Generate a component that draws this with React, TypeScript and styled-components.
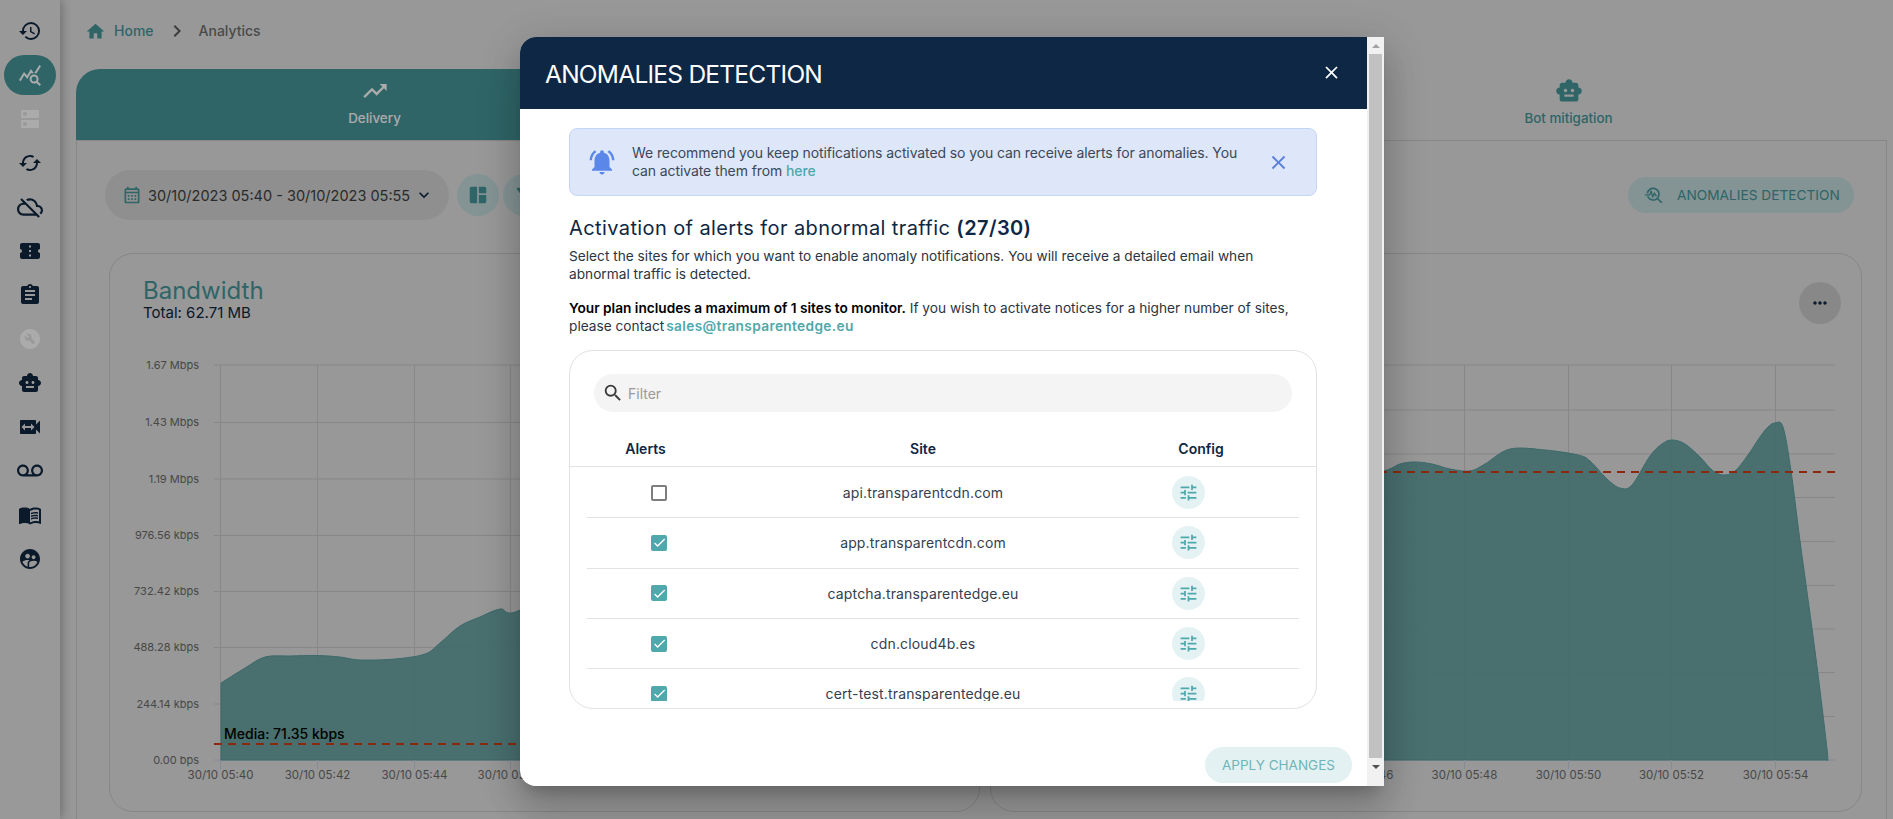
import React from 'react';
import styled, { createGlobalStyle } from 'styled-components';
import {
  MdAssignment,
  MdBuildCircle,
  MdCached,
  MdCheck,
  MdChevronRight,
  MdClose,
  MdConfirmationNumber,
  MdDns,
  MdExpandMore,
  MdFilterAlt,
  MdHistory,
  MdHome,
  MdMenuBook,
  MdMoreHoriz,
  MdNotificationsActive,
  MdOutlineCalendarMonth,
  MdOutlineCloudOff,
  MdOutlineTroubleshoot,
  MdQueryStats,
  MdSearch,
  MdSmartToy,
  MdSpaceDashboard,
  MdSupervisedUserCircle,
  MdSwitchVideo,
  MdTrendingUp,
  MdTune,
  MdVoicemail,
} from 'react-icons/md';

const teal = '#46979a';
const navy = '#0f2740';
const font = 'Inter, "Noto Sans", sans-serif';

const GlobalStyle = createGlobalStyle`
  html, body {
    margin: 0;
    height: 100%;
    overflow: hidden;
    background: #e3e3e3;
    font-family: ${font};
  }
  * { box-sizing: border-box; }
`;

const Page = styled.div`
  display: flex;
  width: 1893px;
  height: 819px;
  overflow: hidden;
  background: #e3e3e3;
`;

const Sidebar = styled.nav`
  flex: 0 0 60px;
  display: flex;
  flex-direction: column;
  align-items: center;
  padding-top: 9px;
  background: #e5e5e5;
  box-shadow: 2px 0 10px rgba(0, 0, 0, 0.28);
  position: relative;
`;

const SideItem = styled.div<{ $active?: boolean; $muted?: boolean; $large?: boolean }>`
  width: 52px;
  height: 44px;
  display: flex;
  align-items: center;
  justify-content: center;
  font-size: ${(p) => (p.$large ? '26px' : '24px')};
  color: ${(p) => (p.$muted ? '#ffffff' : p.$active ? '#ffffff' : navy)};
  & > span {
    width: 52px;
    height: 40px;
    display: flex;
    align-items: center;
    justify-content: center;
    border-radius: 20px;
    background: ${(p) => (p.$active ? teal : 'transparent')};
  }
`;

const Main = styled.main`
  flex: 1;
  min-width: 0;
  padding: 0 6px 0 16px;
`;

const Crumbs = styled.div`
  height: 69px;
  padding: 20px 0 0 9px;
  display: flex;
  align-items: flex-start;
  font-size: 14px;
  font-weight: 500;
  line-height: 22px;
  color: #6f6f6f;
`;

const HomeLink = styled.span`
  display: flex;
  align-items: center;
  gap: 8px;
  color: ${teal};
  font-size: 14px;
  svg { font-size: 21px; }
`;

const CrumbSep = styled.span`
  display: flex;
  align-items: center;
  height: 22px;
  margin: 0 10px 0 11px;
  font-size: 24px;
  color: #5a5a5a;
`;

const Tabs = styled.div`
  display: grid;
  grid-template-columns: repeat(3, 597px);
  height: 71px;
`;

const Tab = styled.div<{ $active?: boolean }>`
  display: flex;
  flex-direction: column;
  align-items: center;
  padding-top: 8px;
  font-size: 13.4px;
  font-weight: 500;
  color: ${(p) => (p.$active ? '#ffffff' : teal)};
  background: ${(p) => (p.$active ? teal : 'transparent')};
  border-radius: 24px 24px 0 0;
  svg { font-size: 28px; margin-bottom: 5px; }
`;

const Panel = styled.section`
  height: 700px;
  padding: 29px 24px 0 32px;
  border: 1px solid #c9c9c9;
`;

const Toolbar = styled.div`
  display: flex;
  align-items: center;
  gap: 8px;
  height: 50px;
  margin: 0 8px 33px -4px;
`;

const DatePill = styled.div`
  width: 344px;
  height: 50px;
  padding: 0 17px;
  display: flex;
  align-items: center;
  border-radius: 25px;
  background: #d5d5d5;
  font-size: 14.5px;
  color: #3f3f3f;
  white-space: nowrap;
  svg:first-child { color: ${teal}; font-size: 20px; margin-right: 6px; flex: none; }
  svg:last-child { color: ${navy}; font-size: 20px; margin-left: 4px; flex: none; }
`;

const RoundIcon = styled.div`
  flex: none;
  width: 42px;
  height: 42px;
  display: flex;
  align-items: center;
  justify-content: center;
  border-radius: 50%;
  background: #c5dcdd;
  color: ${teal};
  font-size: 22px;
  & + & { margin-left: -4px; }
`;

const AnomaliesButton = styled.div`
  margin-left: auto;
  width: 226px;
  height: 36px;
  padding-left: 16px;
  display: flex;
  align-items: center;
  gap: 13px;
  border-radius: 18px;
  background: #c5dcdd;
  color: ${teal};
  font-size: 13.7px;
  white-space: nowrap;
  svg { font-size: 20px; flex: none; }
`;

const Charts = styled.div`
  display: grid;
  grid-template-columns: 871px 872px;
  gap: 10px;
`;

const ChartCard = styled.article`
  position: relative;
  height: 559px;
  border: 1px solid #c9c9c9;
  border-radius: 24px;
  overflow: hidden;
`;

const ChartHead = styled.header`
  height: 99px;
  padding: 22px 0 0 33px;
`;

const ChartTitle = styled.div`
  font-size: 24px;
  line-height: 30px;
  color: ${teal};
`;

const ChartTotal = styled.div`
  margin-top: -2px;
  font-size: 15px;
  line-height: 17px;
  color: ${navy};
`;

const DotsButton = styled.div`
  position: absolute;
  top: 28px;
  right: 20px;
  width: 42px;
  height: 42px;
  display: flex;
  align-items: center;
  justify-content: center;
  border-radius: 50%;
  background: #cbcbcb;
  color: ${navy};
  font-size: 20px;
`;

const ChartSvg = styled.svg`
  display: block;
  text {
    font-family: ${font};
    font-size: 11.5px;
    fill: #6b6b6b;
  }
  text.ylabel {
    font-size: 11px;
  }
  text.media {
    font-size: 14px;
    font-weight: 500;
    fill: #000;
  }
`;

const Backdrop = styled.div`
  position: fixed;
  inset: 0;
  background: rgba(0, 0, 0, 0.33);
`;

const Modal = styled.div`
  position: fixed;
  left: 520px;
  top: 37px;
  width: 864px;
  height: 749px;
  display: flex;
  border-radius: 16px 0 0 16px;
  overflow: hidden;
  background: #fff;
`;

const ModalShadow = styled.div`
  position: fixed;
  left: 520px;
  top: 37px;
  width: 864px;
  height: 749px;
  border-radius: 16px 0 0 16px;
  box-shadow: 0 11px 15px -7px rgba(0, 0, 0, 0.2), 0 24px 38px 3px rgba(0, 0, 0, 0.14),
    0 9px 46px 8px rgba(0, 0, 0, 0.12);
`;

const ModalBody = styled.div`
  flex: 1;
  min-width: 0;
  display: flex;
  flex-direction: column;
`;

const ModalHeader = styled.div`
  height: 72px;
  flex: none;
  padding: 2px 25px 0 25px;
  display: flex;
  align-items: center;
  justify-content: space-between;
  background: #0d2744;
  color: #fff;
  font-size: 24.5px;
  letter-spacing: -0.75px;
  svg { font-size: 21px; margin-top: -4px; }
`;

const ModalContent = styled.div`
  flex: 1;
  padding: 19px 50px 0 49px;
  color: #2b3441;
`;

const Alert = styled.div`
  height: 68px;
  padding: 0 26px 0 17px;
  display: flex;
  align-items: center;
  border: 1px solid #c4d5f5;
  border-radius: 8px;
  background: #dde7f9;
  font-size: 14px;
  line-height: 18px;
  letter-spacing: -0.1px;
  color: #3c4858;
  & > div { flex: 1; }
  & > svg:first-child { flex: none; font-size: 30px; color: #5b87e8; margin-right: 15px; }
  & > svg:last-child { flex: none; font-size: 23px; color: #5b7fdb; margin-left: 16px; }
`;

const TealLink = styled.a`
  color: #4fa8ab;
  font-weight: 500;
`;

const Heading = styled.h2`
  margin: 20px 0 0;
  font-size: 20px;
  font-weight: 400;
  line-height: 24px;
  letter-spacing: 0.4px;
  color: #0d2744;
  b { font-weight: 600; }
`;

const Para = styled.p`
  max-width: 735px;
  margin: 7px 0 16px;
  font-size: 13.7px;
  line-height: 18px;
  color: #2b3441;
  b { font-weight: 600; color: #000; }
`;

const MailLink = styled(TealLink)`
  margin-left: 2px;
  font-weight: 600;
  letter-spacing: 0.35px;
`;

const TableCard = styled.div`
  height: 359px;
  margin-top: -1px;
  padding-top: 23px;
  border: 1px solid #e2e2e2;
  border-radius: 24px;
`;

const FilterBox = styled.div`
  height: 38px;
  margin: 0 24px;
  padding-left: 8px;
  display: flex;
  align-items: center;
  gap: 4px;
  border-radius: 19px;
  background: #f4f4f4;
  font-size: 14px;
  color: #9a9a9a;
  svg { font-size: 22px; color: #3a3a3a; }
`;

const HeadRow = styled.div`
  display: grid;
  grid-template-columns: 151px 404px 152px 1fr;
  height: 55px;
  padding-top: 27px;
  border-bottom: 1px solid #e2e2e2;
  font-size: 14px;
  font-weight: 600;
  line-height: 20px;
  text-align: center;
  color: #0d2744;
`;

const Rows = styled.div`
  height: 233px;
  margin: 1px 17px 0;
  overflow: hidden;
`;

const Row = styled.div`
  display: grid;
  grid-template-columns: 144px 384px 146px 1fr;
  align-items: center;
  justify-items: center;
  height: 50.33px;
  border-bottom: 1px solid #e2e2e2;
  font-size: 14px;
  letter-spacing: 0.15px;
  color: #344050;
`;

const Check = styled.span<{ $on: boolean }>`
  width: 16px;
  height: 16px;
  display: flex;
  align-items: center;
  justify-content: center;
  border-radius: 2px;
  border: ${(p) => (p.$on ? 'none' : '2px solid #7d7d7d')};
  background: ${(p) => (p.$on ? '#4fa8ab' : '#fff')};
  color: #fff;
  font-size: 15px;
`;

const ConfigButton = styled.span`
  width: 33px;
  height: 33px;
  display: flex;
  align-items: center;
  justify-content: center;
  border-radius: 50%;
  background: #e4f2f3;
  color: #4fa8ab;
  font-size: 21px;
`;

const ModalFooter = styled.div`
  height: 36px;
  margin-bottom: 3px;
  flex: none;
  padding: 0 15px 0 0;
  display: flex;
  justify-content: flex-end;
`;

const ApplyButton = styled.div`
  width: 147px;
  height: 36px;
  display: flex;
  align-items: center;
  justify-content: center;
  border-radius: 18px;
  background: #e3f1f2;
  color: #6fb5b8;
  font-size: 13.5px;
`;

const Scrollbar = styled.div`
  flex: 0 0 17px;
  display: flex;
  flex-direction: column;
  align-items: center;
  background: #f1f1f1;
`;

const ScrollArrow = styled.div<{ $down?: boolean }>`
  flex: 0 0 17px;
  display: flex;
  align-items: center;
  justify-content: center;
  &::before {
    content: '';
    border-left: 4px solid transparent;
    border-right: 4px solid transparent;
    ${(p) => (p.$down ? 'border-top: 4px solid #505050;' : 'border-bottom: 4px solid #a3a3a3;')}
  }
`;

const ScrollThumb = styled.div`
  width: 13px;
  height: 704px;
  background: #c1c1c1;
`;

type Pt = [number, number];

// curva suave a partir de puntos (catmull-rom)
function smooth(pts: Pt[]) {
  let d = `M${pts[0][0]} ${pts[0][1]}`;
  for (let i = 0; i < pts.length - 1; i++) {
    const p0 = pts[i - 1] || pts[i];
    const p1 = pts[i];
    const p2 = pts[i + 1];
    const p3 = pts[i + 2] || p2;
    const c1x = p1[0] + (p2[0] - p0[0]) / 6;
    const c1y = p1[1] + (p2[1] - p0[1]) / 6;
    const c2x = p2[0] - (p3[0] - p1[0]) / 6;
    const c2y = p2[1] - (p3[1] - p1[1]) / 6;
    d += ` C${c1x} ${c1y} ${c2x} ${c2y} ${p2[0]} ${p2[1]}`;
  }
  return d;
}

type ChartProps = {
  x: number;
  width: number;
  plotStart: number;
  plotEnd: number;
  gridY: number[];
  yLabels?: string[];
  ticks: [number, string][];
  points: Pt[];
  avgY: number;
  media?: boolean;
};

function Chart({ x, width, plotStart, plotEnd, gridY, yLabels, ticks, points, avgY, media }: ChartProps) {
  const base = 759;
  const first = points[0];
  const last = points[points.length - 1];
  const area = `${smooth(points)} L${last[0]} ${base} L${first[0]} ${base} Z`;
  return (
    <ChartSvg width={width} height={440} viewBox={`${x} 352 ${width} 440`}>
      {gridY.map((y, i) => (
        <line key={y} x1={plotStart} x2={plotEnd} y1={y} y2={y} stroke={i === gridY.length - 1 ? '#c4cfe0' : '#c9c9c9'} />
      ))}
      {ticks.map(([tx]) => (
        <line key={tx} x1={tx} x2={tx} y1={gridY[0]} y2={base} stroke="#c9c9c9" />
      ))}
      <path d={area} fill="#66a2a2" fillOpacity={0.95} stroke="#5b9ea0" />
      {ticks.map(([tx, label]) => (
        <g key={label}>
          <line x1={tx} x2={tx} y1={base} y2={base + 9} stroke="#c4cfe0" />
          <text x={tx} y={778} textAnchor="middle">{label}</text>
        </g>
      ))}
      {yLabels &&
        yLabels.map((label, i) => (
          <text key={label} className="ylabel" x={199} y={gridY[i] + 3.5} textAnchor="end">{label}</text>
        ))}
      <line x1={plotStart} x2={plotEnd} y1={avgY} y2={avgY} stroke="#d03c14" strokeWidth={2} strokeDasharray="8 6" />
      {media && <text className="media" x={224} y={738}>Media: 71.35 kbps</text>}
    </ChartSvg>
  );
}

const sideIcons = [
  { icon: <MdHistory /> },
  { icon: <MdQueryStats />, active: true },
  { icon: <MdDns />, muted: true },
  { icon: <MdCached /> },
  { icon: <MdOutlineCloudOff />, large: true },
  { icon: <MdConfirmationNumber /> },
  { icon: <MdAssignment /> },
  { icon: <MdBuildCircle />, muted: true },
  { icon: <MdSmartToy /> },
  { icon: <MdSwitchVideo /> },
  { icon: <MdVoicemail />, large: true },
  { icon: <MdMenuBook /> },
  { icon: <MdSupervisedUserCircle /> },
];

const sites = [
  { name: 'api.transparentcdn.com', on: false },
  { name: 'app.transparentcdn.com', on: true },
  { name: 'captcha.transparentedge.eu', on: true },
  { name: 'cdn.cloud4b.es', on: true },
  { name: 'cert-test.transparentedge.eu', on: true },
];

const leftChart: ChartProps = {
  x: 110,
  width: 869,
  plotStart: 214,
  plotEnd: 960,
  gridY: [364, 421.5, 478, 534.5, 590.5, 646.5, 703, 759],
  yLabels: ['1.67 Mbps', '1.43 Mbps', '1.19 Mbps', '976.56 kbps', '732.42 kbps', '488.28 kbps', '244.14 kbps', '0.00 bps'],
  ticks: [
    [220.5, '30/10 05:40'],
    [317.5, '30/10 05:42'],
    [414.5, '30/10 05:44'],
    [510.5, '30/10 05:46'],
    [607.5, '30/10 05:48'],
    [704.5, '30/10 05:50'],
    [801.5, '30/10 05:52'],
    [898.5, '30/10 05:54'],
  ],
  points: [
    [221, 682], [245, 667], [265, 656], [290, 655], [317, 654.5], [340, 656], [360, 659],
    [395, 658], [425, 653], [440, 642], [460, 625], [480, 616], [500, 608], [520, 609], [600, 560], [900, 500], [950, 759],
  ],
  avgY: 743,
  media: true,
};

const rightChart: ChartProps = {
  x: 991,
  width: 870,
  plotStart: 1043,
  plotEnd: 1835,
  gridY: [364, 409, 453, 496.5, 540.5, 584.5, 628, 671.5, 715.5, 759],
  ticks: [
    [1049.5, '30/10 05:40'],
    [1153.5, '30/10 05:42'],
    [1256.5, '30/10 05:44'],
    [1360.5, '30/10 05:46'],
    [1464.5, '30/10 05:48'],
    [1568.5, '30/10 05:50'],
    [1671.5, '30/10 05:52'],
    [1775.5, '30/10 05:54'],
  ],
  points: [
    [1050, 660], [1200, 500], [1340, 480], [1384, 470], [1400, 463], [1415, 461], [1432, 463], [1450, 468], [1470, 470], [1485, 463],
    [1510, 448], [1545, 449], [1578, 454], [1590, 460], [1607, 478], [1620, 487], [1632, 484],
    [1650, 455], [1662, 443], [1672, 439], [1685, 443], [1700, 456], [1712, 469], [1723, 474], [1735, 470],
    [1748, 454], [1760, 436], [1768, 426], [1775, 422], [1783, 426], [1791, 470], [1800, 540], [1815, 650], [1827, 748], [1827, 759],
  ],
  avgY: 471,
};

export default function App() {
  return (
    <Page>
      <GlobalStyle />
      <Sidebar>
        {sideIcons.map((item, i) => (
          <SideItem key={i} $active={item.active} $muted={item.muted} $large={item.large}>
            <span>{item.icon}</span>
          </SideItem>
        ))}
      </Sidebar>
      <Main>
        <Crumbs>
          <HomeLink><MdHome />Home</HomeLink>
          <CrumbSep><MdChevronRight /></CrumbSep>
          Analytics
        </Crumbs>
        <Tabs>
          <Tab $active><MdTrendingUp />Delivery</Tab>
          <Tab />
          <Tab><MdSmartToy />Bot mitigation</Tab>
        </Tabs>
        <Panel>
          <Toolbar>
            <DatePill>
              <MdOutlineCalendarMonth />
              30/10/2023 05:40 - 30/10/2023 05:55
              <MdExpandMore />
            </DatePill>
            <RoundIcon><MdSpaceDashboard /></RoundIcon>
            <RoundIcon><MdFilterAlt /></RoundIcon>
            <AnomaliesButton><MdOutlineTroubleshoot />ANOMALIES DETECTION</AnomaliesButton>
          </Toolbar>
          <Charts>
            <ChartCard>
              <ChartHead>
                <ChartTitle>Bandwidth</ChartTitle>
                <ChartTotal>Total: 62.71 MB</ChartTotal>
              </ChartHead>
              <Chart {...leftChart} />
            </ChartCard>
            <ChartCard>
              <ChartHead />
              <DotsButton><MdMoreHoriz /></DotsButton>
              <Chart {...rightChart} />
            </ChartCard>
          </Charts>
        </Panel>
      </Main>
      <Backdrop />
      <ModalShadow />
      <Modal>
        <ModalBody>
          <ModalHeader>
            ANOMALIES DETECTION
            <MdClose />
          </ModalHeader>
          <ModalContent>
            <Alert>
              <MdNotificationsActive />
              <div>
                We recommend you keep notifications activated so you can receive alerts for anomalies. You can activate them from <TealLink>here</TealLink>
              </div>
              <MdClose />
            </Alert>
            <Heading>Activation of alerts for abnormal traffic <b>(27/30)</b></Heading>
            <Para>
              Select the sites for which you want to enable anomaly notifications. You will receive a detailed email when abnormal traffic is detected.
            </Para>
            <Para>
              <b>Your plan includes a maximum of 1 sites to monitor.</b> If you wish to activate notices for a higher number of sites, please contact<MailLink>sales@transparentedge.eu</MailLink>
            </Para>
            <TableCard>
              <FilterBox><MdSearch />Filter</FilterBox>
              <HeadRow>
                <span>Alerts</span>
                <span>Site</span>
                <span>Config</span>
              </HeadRow>
              <Rows>
                {sites.map((site) => (
                  <Row key={site.name}>
                    <Check $on={site.on}>{site.on && <MdCheck />}</Check>
                    <span>{site.name}</span>
                    <ConfigButton><MdTune /></ConfigButton>
                  </Row>
                ))}
              </Rows>
            </TableCard>
          </ModalContent>
          <ModalFooter>
            <ApplyButton>APPLY CHANGES</ApplyButton>
          </ModalFooter>
        </ModalBody>
        <Scrollbar>
          <ScrollArrow />
          <ScrollThumb />
          <ScrollArrow $down />
        </Scrollbar>
      </Modal>
    </Page>
  );
}
